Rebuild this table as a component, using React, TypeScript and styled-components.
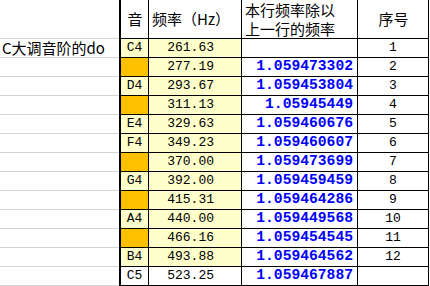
import styled, { createGlobalStyle } from 'styled-components';

const Global = createGlobalStyle`
  html, body { margin: 0; padding: 0; background: #fff; }
  body { width: 430px; height: 286px; overflow: hidden; }
`

const cjk = `"Noto Sans CJK SC", "Noto Sans", sans-serif`
const mono = `"Liberation Mono", "DejaVu Sans Mono", monospace`

interface Row {
  note: string;
  black: boolean;
  freq: string;
  ratio: string;
  n: string;
  label?: string;
  plain?: boolean;
}

const rows: Row[] = [
  { note: 'C4', black: false, freq: '261.63', ratio: '', n: '1', label: 'C大调音阶的do' },
  { note: '', black: true, freq: '277.19', ratio: '1.059473302', n: '2' },
  { note: 'D4', black: false, freq: '293.67', ratio: '1.059453804', n: '3' },
  { note: '', black: true, freq: '311.13', ratio: '1.05945449', n: '4' },
  { note: 'E4', black: false, freq: '329.63', ratio: '1.059460676', n: '5' },
  { note: 'F4', black: false, freq: '349.23', ratio: '1.059460607', n: '6' },
  { note: '', black: true, freq: '370.00', ratio: '1.059473699', n: '7' },
  { note: 'G4', black: false, freq: '392.00', ratio: '1.059459459', n: '8' },
  { note: '', black: true, freq: '415.31', ratio: '1.059464286', n: '9' },
  { note: 'A4', black: false, freq: '440.00', ratio: '1.059449568', n: '10' },
  { note: '', black: true, freq: '466.16', ratio: '1.059454545', n: '11' },
  { note: 'B4', black: false, freq: '493.88', ratio: '1.059464562', n: '12' },
  { note: 'C5', black: false, freq: '523.25', ratio: '1.059467887', n: '', plain: true },
]

const Sheet = styled.div`
  display: grid;
  grid-template-columns: 119px 30px 93px 116px 71px;
  grid-template-rows: 39px repeat(13, 19px);
  width: 429px;
`

const Cell = styled.div`
  box-sizing: border-box;
  display: flex;
  align-items: flex-end;
  border-bottom: 1px solid #000;
  border-right: 1px solid #000;
  white-space: nowrap;
  color: #000;
`

const Label = styled(Cell)`
  border-right: none;
  border-bottom: 1px solid #d4d4d4;
  font-family: ${cjk};
  font-size: 15px;
  line-height: 18px;
  padding-left: 2px;
`

const Note = styled(Cell)<{ $bg: string }>`
  border-left: 2px solid #000;
  justify-content: center;
  background: ${p => p.$bg};
  font-family: ${mono};
  font-size: 13px;
  line-height: 17px;
  padding-bottom: 1px;
`

const Freq = styled(Cell)<{ $bg: string }>`
  justify-content: flex-end;
  padding-right: 27px;
  background: ${p => p.$bg};
  font-family: ${mono};
  font-size: 13px;
  line-height: 17px;
  padding-bottom: 1px;
`

const Ratio = styled(Cell)`
  justify-content: flex-end;
  padding-right: 4px;
  color: #0000ff;
  font-family: ${mono};
  font-weight: bold;
  font-size: 14.67px;
  line-height: 17px;
  padding-bottom: 1px;
`

const Serial = styled(Cell)`
  justify-content: center;
  font-family: ${mono};
  font-size: 13px;
  line-height: 17px;
  padding-bottom: 1px;
`

const Head = styled(Cell)<{ $align: string; $first?: boolean }>`
  align-items: center;
  justify-content: ${p => p.$align};
  border-left: ${p => (p.$first ? '2px solid #000' : 'none')};
  font-family: ${cjk};
  font-size: 15px;
  line-height: 19px;
  padding: 0 2px 1px 3px;
`

export default function App() {
  return (
    <>
      <Global />
      <Sheet>
        <Label />
        <Head $align="center" $first>音</Head>
        <Head $align="flex-start">频率（Hz）</Head>
        <Head $align="flex-start">本行频率除以<br />上一行的频率</Head>
        <Head $align="center">序号</Head>
        {rows.map((r, i) => {
          const noteBg = r.plain ? '#fff' : r.black ? '#ffc000' : '#ffffcc'
          const freqBg = r.plain ? '#fff' : '#ffffcc'
          return [
            <Label key={`l${i}`}>{r.label}</Label>,
            <Note key={`n${i}`} $bg={noteBg}>{r.note}</Note>,
            <Freq key={`f${i}`} $bg={freqBg}>{r.freq}</Freq>,
            <Ratio key={`r${i}`}>{r.ratio}</Ratio>,
            <Serial key={`s${i}`}>{r.n}</Serial>,
          ]
        })}
      </Sheet>
    </>
  )
}
